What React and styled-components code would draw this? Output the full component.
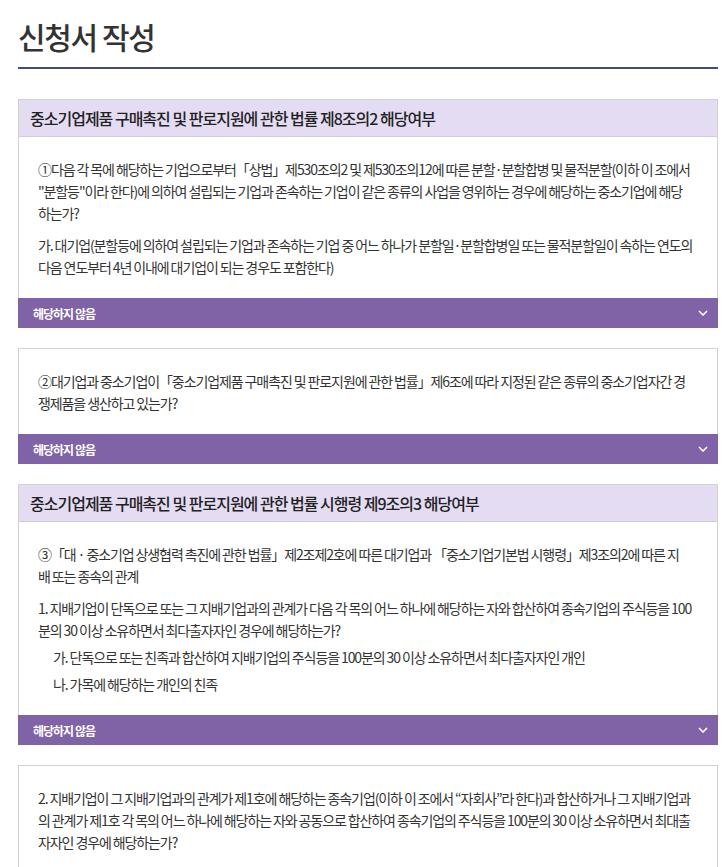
import React from "react";
import styled, { createGlobalStyle } from "styled-components";

const GlobalStyle = createGlobalStyle`
  body {
    margin: 0;
    background: #fff;
    font-family: "Noto Sans CJK KR", "Noto Sans", sans-serif;
    color: #333;
  }
`;

// line breaks follow the original layout
const sections = [
  {
    title: "중소기업제품 구매촉진 및 판로지원에 관한 법률 제8조의2 해당여부",
    items: [
      {
        paras: [
          { text: "①다음 각 목에 해당하는 기업으로부터「상법」제530조의2 및 제530조의12에 따른 분할·분할합병 및 물적분할(이하 이 조에서\n\"분할등\"이라 한다)에 의하여 설립되는 기업과 존속하는 기업이 같은 종류의 사업을 영위하는 경우에 해당하는 중소기업에 해당\n하는가?" },
          { text: "가. 대기업(분할등에 의하여 설립되는 기업과 존속하는 기업 중 어느 하나가 분할일·분할합병일 또는 물적분할일이 속하는 연도의\n다음 연도부터 4년 이내에 대기업이 되는 경우도 포함한다)" },
        ],
      },
      {
        paras: [
          { text: "②대기업과 중소기업이「중소기업제품 구매촉진 및 판로지원에 관한 법률」제6조에 따라 지정된 같은 종류의 중소기업자간 경\n쟁제품을 생산하고 있는가?" },
        ],
      },
    ],
  },
  {
    title: "중소기업제품 구매촉진 및 판로지원에 관한 법률 시행령 제9조의3 해당여부",
    items: [
      {
        paras: [
          { text: "③「대 · 중소기업 상생협력 촉진에 관한 법률」제2조제2호에 따른 대기업과 「중소기업기본법 시행령」제3조의2에 따른 지\n배 또는 종속의 관계" },
          { text: "1. 지배기업이 단독으로 또는 그 지배기업과의 관계가 다음 각 목의 어느 하나에 해당하는 자와 합산하여 종속기업의 주식등을 100\n분의 30 이상 소유하면서 최다출자자인 경우에 해당하는가?" },
          { text: "가. 단독으로 또는 친족과 합산하여 지배기업의 주식등을 100분의 30 이상 소유하면서 최다출자자인 개인", sub: true },
          { text: "나. 가목에 해당하는 개인의 친족", sub: true },
        ],
      },
      {
        paras: [
          { text: "2. 지배기업이 그 지배기업과의 관계가 제1호에 해당하는 종속기업(이하 이 조에서 “자회사”라 한다)과 합산하거나 그 지배기업과\n의 관계가 제1호 각 목의 어느 하나에 해당하는 자와 공동으로 합산하여 종속기업의 주식등을 100분의 30 이상 소유하면서 최대출\n자자인 경우에 해당하는가?" },
        ],
        last: true,
      },
    ],
  },
];

function Chevron() {
  return (
    <svg width="10" height="6" viewBox="0 0 10 6">
      <polyline points="1,1 5,5 9,1" fill="none" stroke="#fff" strokeWidth="1.6" />
    </svg>
  );
}

function App() {
  return (
    <Page>
      <GlobalStyle />
      <PageTitle>신청서 작성</PageTitle>
      {sections.map((sec, i) => (
        <Section key={i}>
          {sec.items.map((item, j) => (
            <Card key={j}>
              <CardBody>
                {j === 0 && <CardHeader>{sec.title}</CardHeader>}
                <CardContent>
                  {item.paras.map((p, k) => (
                    <Para key={k} $sub={p.sub}>{p.text}</Para>
                  ))}
                </CardContent>
              </CardBody>
              {!item.last && (
                <SelectBar>
                  <span>해당하지 않음</span>
                  <Chevron />
                </SelectBar>
              )}
            </Card>
          ))}
        </Section>
      ))}
    </Page>
  );
}

const Page = styled.div`
  padding: 16px 5px 0 18px;
  width: 700px;
`;

const PageTitle = styled.h1`
  margin: 0;
  font-size: 30px;
  line-height: 40px;
  font-weight: 500;
  letter-spacing: -1.4px;
  color: #333;
  padding-bottom: 11px;
  border-bottom: 2px solid #3e4f6d;
  margin-bottom: 30px;
`;

const Section = styled.div`
  display: flex;
  flex-direction: column;
  gap: 20px;
  margin-bottom: 20px;
`;

const Card = styled.div`
  display: flex;
  flex-direction: column;
`;

const CardBody = styled.div`
  border: 1px solid #d2d2d2;
  border-bottom: none;
`;

const CardHeader = styled.div`
  background-color: #e4dcf3;
  border-bottom: 1px solid #cfcfcf;
  height: 36px;
  display: flex;
  align-items: center;
  padding: 0 11px;
  font-size: 16px;
  font-weight: 500;
  letter-spacing: -1px;
  color: #222;
`;

const CardContent = styled.div`
  padding: 21px 12px 20px 19px;
`;

const Para = styled.p`
  margin: ${(p) => (p.$sub ? "5px 0 0 15px" : "10px 0 0 0")};
  font-size: 14px;
  line-height: 22px;
  letter-spacing: -1.1px;
  white-space: pre-line;
  color: #333;

  &:first-child {
    margin-top: 0;
  }
`;

const SelectBar = styled.div`
  height: 30px;
  background-color: #8063a6;
  display: flex;
  align-items: center;
  justify-content: space-between;
  padding: 0 10px 0 15px;
  color: #fff;
  font-size: 12px;
  font-weight: 700;
  letter-spacing: -1px;
`;

export default App;
